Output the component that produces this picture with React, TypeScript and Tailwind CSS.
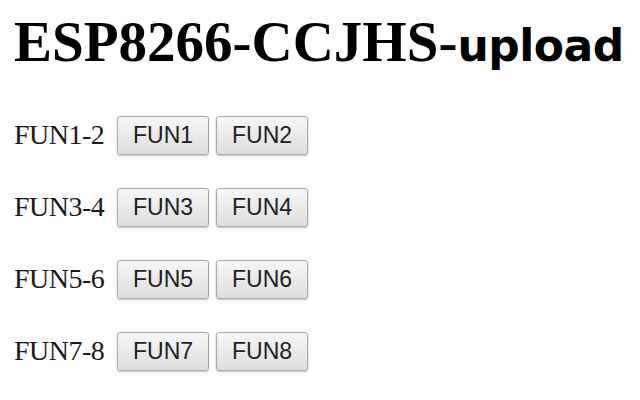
import React from "react";

const ROWS = [
  { label: "FUN1-2", buttons: ["FUN1", "FUN2"] },
  { label: "FUN3-4", buttons: ["FUN3", "FUN4"] },
  { label: "FUN5-6", buttons: ["FUN5", "FUN6"] },
  { label: "FUN7-8", buttons: ["FUN7", "FUN8"] },
];

function FunButton({ children }: { children: React.ReactNode }) {
  return (
    <button
      type="button"
      className="flex h-[39px] w-[92px] items-center justify-center rounded-[3px] border border-[#a9a9a9] bg-gradient-to-b from-[#f6f6f6] to-[#dedede] text-[23px] text-[#222] shadow-[0_1px_2px_rgba(0,0,0,0.25)] [font-family:'Liberation_Sans',Arial,sans-serif]"
    >
      {children}
    </button>
  );
}

export default function App() {
  return (
    <div className="h-[400px] w-[640px] overflow-hidden bg-white px-[14px] pt-[13px] text-black">
      <h1 className="flex items-baseline whitespace-nowrap leading-none">
        <span className="text-[57px] font-bold [font-family:'Liberation_Serif','Times_New_Roman',serif]">
          ESP8266-CCJHS-
        </span>
        <span className="text-[44px] font-bold tracking-[-0.5px] [font-family:'DejaVu_Sans',Verdana,sans-serif]">
          upload
        </span>
      </h1>

      <div className="mt-[44px] flex flex-col gap-[30px]">
        {ROWS.map((row) => (
          <div key={row.label} className="flex items-center gap-[7px]">
            <span className="w-[96px] text-[28px] tracking-[-0.5px] text-[#1a1a1a] [font-family:'Liberation_Serif','Times_New_Roman',serif]">
              {row.label}
            </span>
            {row.buttons.map((b) => (
              <FunButton key={b}>{b}</FunButton>
            ))}
          </div>
        ))}
      </div>
    </div>
  );
}
